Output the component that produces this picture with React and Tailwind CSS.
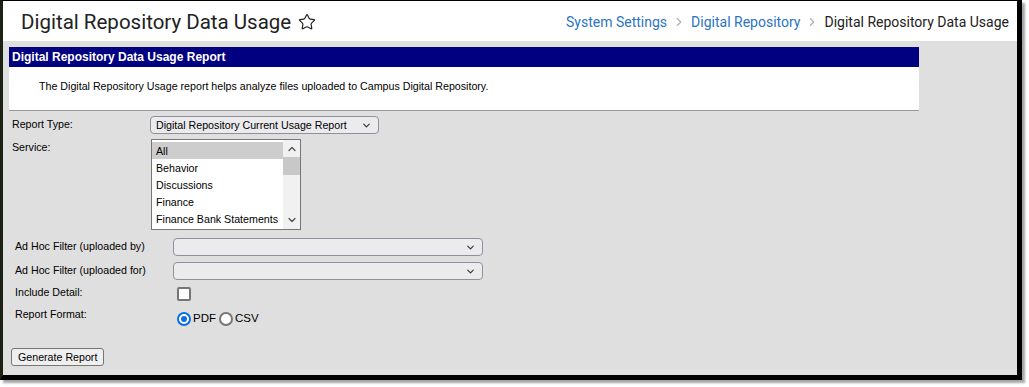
import { Star, ChevronRight, ChevronDown, ChevronUp } from 'lucide-react';

const arial = { fontFamily: '"Liberation Sans", Arial, sans-serif' };

const Select = ({ width, value }) => (
  <div
    className={`flex items-center justify-between h-[18px] ${width} border border-[#8f8f9d] rounded-[4px] bg-[#ebebee] pl-[5px] pr-[6px] text-[10.67px] text-black`}
  >
    <span>{value}</span>
    <ChevronDown size={11} strokeWidth={2.5} className="text-[#333]" />
  </div>
);

const services = ['All', 'Behavior', 'Discussions', 'Finance', 'Finance Bank Statements'];

function App() {
  return (
    <div className="w-[1029px] h-[387px] bg-white" style={arial}>
      <div className="flex flex-col w-[1022px] h-[380px] border-l-[3px] border-l-[#1b2113] border-t border-r-[5px] border-b-[5px] border-black shadow-[3px_3px_2px_rgba(0,0,0,0.35)]">
        {/* page header */}
        <div className="flex items-center justify-between h-[40px] bg-white pl-[18px] pr-[8px] pt-[2px] shrink-0">
          <div className="flex items-center gap-[7px]">
            <h1 className="text-[20.5px] text-[#222] leading-none" style={{ fontFamily: 'Roboto, sans-serif' }}>
              Digital Repository Data Usage
            </h1>
            <Star size={18} strokeWidth={1.6} className="text-[#222]" />
          </div>
          <div className="flex items-center gap-[5px] text-[14px]" style={{ fontFamily: 'Roboto, sans-serif' }}>
            <span className="text-[#2b74c4]">System Settings</span>
            <ChevronRight size={14} className="text-[#b0b0b0]" />
            <span className="text-[#2b74c4]">Digital Repository</span>
            <ChevronRight size={14} className="text-[#b0b0b0]" />
            <span className="text-[#222]">Digital Repository Data Usage</span>
          </div>
        </div>

        {/* body */}
        <div className="flex-1 bg-[#dfdfdf] pt-[6px] pl-[6px]">
          <div className="w-[910px]">
            <div className="h-[20px] bg-[#000080] text-white font-bold text-[12px] flex items-center pl-[3px]">
              Digital Repository Data Usage Report
            </div>
            <div className="h-[44px] bg-white border-b border-[#9a9a9a] pl-[30px] pt-[11px] text-[10.67px] text-black">
              The Digital Repository Usage report helps analyze files uploaded to Campus Digital Repository.
            </div>
          </div>

          <div className="text-[10.67px] text-black">
            <div className="flex items-start mt-[5px] pl-[3px]">
              <span className="w-[138px]">Report Type:</span>
              <Select width="w-[229px]" value="Digital Repository Current Usage Report" />
            </div>
            <div className="flex items-start mt-[5px] pl-[3px]">
              <span className="w-[139px]">Service:</span>
              <div className="flex w-[150px] h-[91px] border border-[#767676] bg-white">
                <div className="flex-1 flex flex-col pt-[2px]">
                  {services.map((s, i) => (
                    <div
                      key={s}
                      className={`h-[17px] flex items-center pl-[4px] ${i === 0 ? 'bg-[#cdcdcd]' : ''}`}
                    >
                      {s}
                    </div>
                  ))}
                </div>
                <div className="w-[17px] bg-[#f1f1f1] flex flex-col items-center">
                  <ChevronUp size={12} strokeWidth={2.5} className="text-[#505050] mt-[3px]" />
                  <div className="w-full h-[18px] bg-[#c8c8c8] mt-[2px]" />
                  <div className="flex-1" />
                  <ChevronDown size={12} strokeWidth={2.5} className="text-[#505050] mb-[3px]" />
                </div>
              </div>
            </div>

            <div className="flex flex-col pl-[6px] mt-[8px]">
              <div className="flex items-start">
                <span className="w-[158px]">Ad Hoc Filter (uploaded by)</span>
                <Select width="w-[310px]" value="" />
              </div>
              <div className="flex items-start mt-[6px]">
                <span className="w-[158px]">Ad Hoc Filter (uploaded for)</span>
                <Select width="w-[310px]" value="" />
              </div>
              <div className="flex items-start mt-[3px] h-[23px]">
                <span className="w-[162px] pt-[1px]">Include Detail:</span>
                <div className="w-[14px] h-[14px] mt-[4px] border-2 border-[#767676] rounded-[2px] bg-white" />
              </div>
              <div className="flex items-start">
                <span className="w-[162px]">Report Format:</span>
                <div className="flex items-center mt-[4px] text-[11.5px]">
                  <div className="w-[14px] h-[14px] rounded-full border-2 border-[#0b6ee0] flex items-center justify-center bg-white">
                    <div className="w-[6px] h-[6px] rounded-full bg-[#0b6ee0]" />
                  </div>
                  <span className="ml-[2px]">PDF</span>
                  <div className="w-[14px] h-[14px] rounded-full border-2 border-[#767676] bg-white ml-[3px]" />
                  <span className="ml-[2px]">CSV</span>
                </div>
              </div>
            </div>

            <button className="mt-[21px] ml-[2px] h-[18px] px-[6px] border border-[#767676] rounded-[3px] bg-[#efefef] text-[10.67px] leading-none text-black">
              Generate Report
            </button>
          </div>
        </div>
      </div>
    </div>
  );
}

export default App;
